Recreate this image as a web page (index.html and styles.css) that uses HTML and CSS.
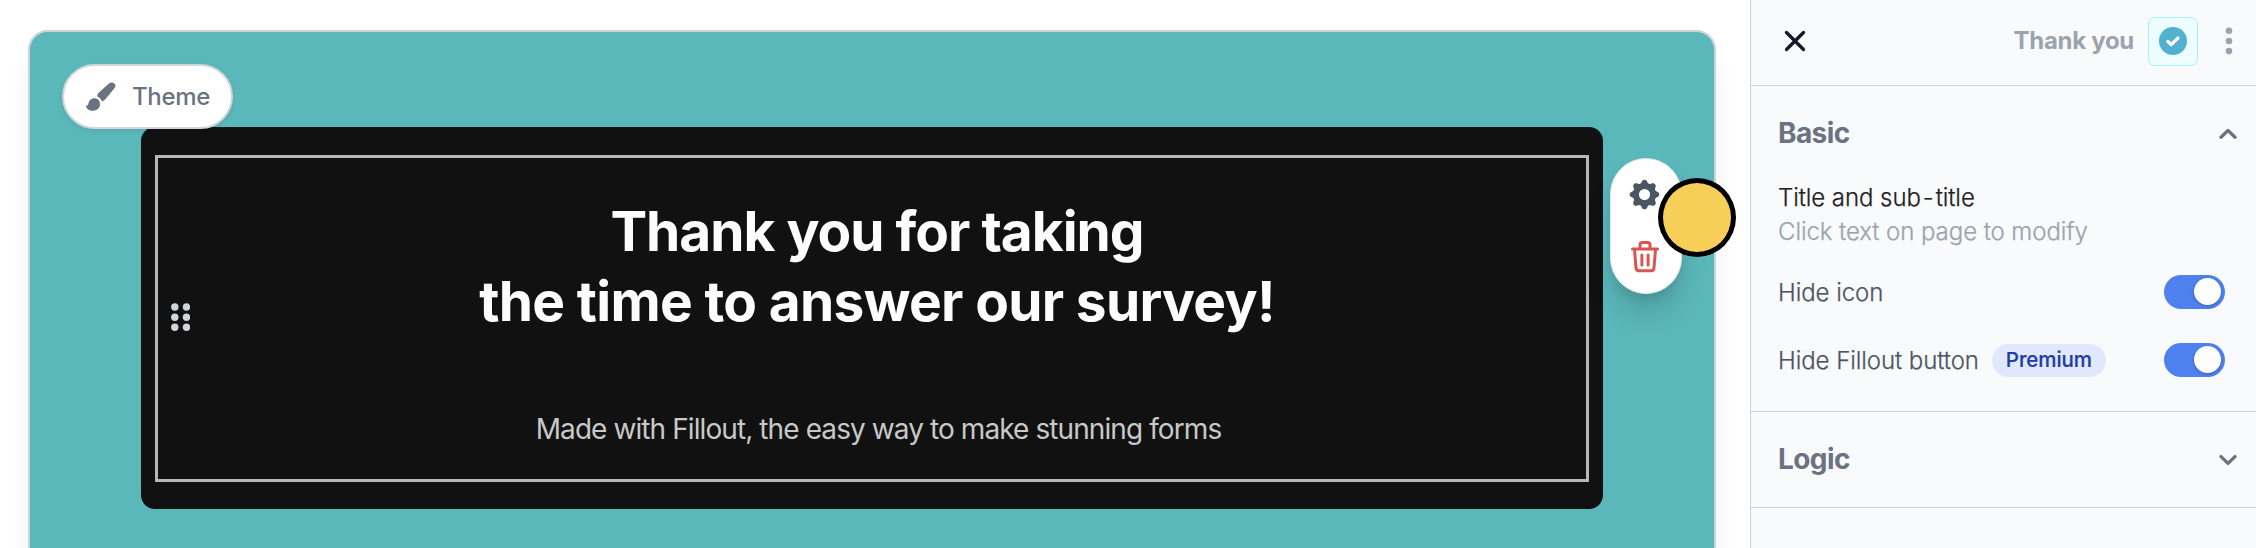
FILE: index.html
```html
<!DOCTYPE html>
<html lang="en">
<head>
<meta charset="utf-8">
<title>Form editor</title>
<link rel="stylesheet" href="styles.css">
</head>
<body>
<div class="app">
  <main class="workspace">
    <div class="canvas">
      <button class="theme-button">
        <svg width="32" height="32" viewBox="0 0 32 32" fill="#6b7280"><path d="M28.9 2.3C27.6 1 25.400 1.400 24 2.600L14.200 11.200C12.700 12.600 12 14.200 12.200 15.600C14.500 16.500 16.100 18.200 16.900 20.300C18.500 19.900 19.600 19.300 20.800 17.800L29.600 7C31 5.300 31 3.700 28.900 2.300Z"/><path d="M9.300 17.300C12.700 17.300 15 19.700 15 23C15 27 12 29.700 8 29.700C4.300 29.700 1.200 28 1 24.400C1.800 24.700 3 24.500 3.300 23.300C3.800 19.800 6 17.300 9.300 17.300Z"/></svg>
        <span class="theme-label">Theme</span>
      </button>
      <section class="block">
        <div class="block-frame">
          <svg class="drag" width="20" height="28" viewBox="0 0 20 28" fill="#d1d5db"><circle cx="4.800" cy="4" r="3.700"/><circle cx="16.500" cy="4" r="3.700"/><circle cx="4.800" cy="14.200" r="3.700"/><circle cx="16.500" cy="14.200" r="3.700"/><circle cx="4.800" cy="24.300" r="3.700"/><circle cx="16.500" cy="24.300" r="3.700"/></svg>
          <h1 class="title"><span class="line-one">Thank you for taking</span><br><span class="line-two">the time to answer our survey!</span></h1>
          <p class="subtitle">Made with Fillout, the easy way to make stunning forms</p>
        </div>
        <div class="tools">
          <svg width="37" height="37" viewBox="0 0 20 20" fill="#4b5563"><path fill-rule="evenodd" d="M11.490 3.170c-.38-1.560-2.600-1.560-2.980 0a1.532 1.532 0 01-2.286.948c-1.372-.836-2.942.734-2.106 2.106.54.886.061 2.042-.947 2.287-1.561.379-1.561 2.600 0 2.978a1.532 1.532 0 01.947 2.287c-.836 1.372.734 2.942 2.106 2.106a1.532 1.532 0 012.287.947c.379 1.561 2.600 1.561 2.978 0a1.533 1.533 0 012.287-.947c1.372.836 2.942-.734 2.106-2.106a1.533 1.533 0 01.947-2.287c1.561-.379 1.561-2.600 0-2.978a1.532 1.532 0 01-.947-2.287c.836-1.372-.734-2.942-2.106-2.106a1.532 1.532 0 01-2.287-.947zM10 13a3 3 0 100-6 3 3 0 000 6z"/></svg>
          <svg width="30" height="34" viewBox="0 0 30 34" fill="none" stroke="#dc5450" stroke-width="3" stroke-linecap="round" stroke-linejoin="round"><path d="M2.500 10H27.500M4.500 10L6 29Q6.300 31.800 9 31.800H21Q23.700 31.800 24 29L25.500 10M10 9.500V6Q10 3.500 12.500 3.500H17.500Q20 3.500 20 6V9.500M11.900 16V26M18.100 16V26"/></svg>
          <i class="pointer"></i>
        </div>
      </section>
    </div>
  </main>
  <aside class="panel">
    <header class="panel-head">
      <svg width="24" height="24" viewBox="0 0 24 24" fill="none" stroke="#111827" stroke-width="3.300" stroke-linecap="round"><path d="M3.500 3.500L20.500 20.500M20.500 3.500L3.500 20.500"/></svg>
      <span class="step-name">Thank you</span>
      <span class="step-icon"><svg width="28" height="28" viewBox="0 0 28 28"><circle cx="14" cy="14" r="14" fill="#51b1ce"/><path d="M8.800 14.500L12.200 17.600L18.900 11.100" fill="none" stroke="#fff" stroke-width="3.400" stroke-linecap="round" stroke-linejoin="round"/></svg></span>
      <svg class="more" width="8" height="28" viewBox="0 0 8 28" fill="#9ca3af"><circle cx="4" cy="3.700" r="3.300"/><circle cx="4" cy="14" r="3.300"/><circle cx="4" cy="24.100" r="3.300"/></svg>
    </header>
    <section class="group">
      <div class="group-head"><h2 class="group-name">Basic</h2>
        <svg width="18" height="12" viewBox="0 0 18 12" fill="none" stroke="#6b7280" stroke-width="3.300" stroke-linecap="round" stroke-linejoin="round"><path d="M2 9.200L9 2.400L16 9.200"/></svg></div>
      <p class="field-name">Title and sub<span class="dash">-</span>title</p>
      <p class="field-hint">Click text on page to modify</p>
      <div class="row first"><span class="row-label">Hide icon</span><span class="toggle"><i class="knob"></i></span></div>
      <div class="row"><span class="row-label">Hide Fillout button</span><span class="badge">Premium</span><span class="toggle"><i class="knob"></i></span></div>
    </section>
    <section class="group closed">
      <div class="group-head"><h2 class="group-name">Logic</h2>
        <svg width="18" height="12" viewBox="0 0 18 12" fill="none" stroke="#6b7280" stroke-width="3.300" stroke-linecap="round" stroke-linejoin="round"><path d="M2 2.600L9 9.400L16 2.600"/></svg></div>
    </section>
  </aside>
</div>
</body>
</html>
```
FILE: styles.css
```css
* { box-sizing: border-box; margin: 0; padding: 0; }
body { font-family: Inter, "Liberation Sans", sans-serif; background: #fff; }
svg { display: block; flex: none; }
.app { display: flex; width: 2256px; height: 548px; overflow: hidden; }
.workspace { flex: 1; padding: 30px 34px 0 28px; overflow: hidden; }
.canvas { position: relative; height: 640px; border: 2px solid #cfd3d8; border-radius: 20px; background: #5ab7ba; padding: 95px 111px 0; box-shadow: 0 24px 26px -4px rgba(0,0,0,.08); }
.theme-button { position: absolute; z-index: 2; left: 32px; top: 32px; width: 171px; height: 65px; display: flex; align-items: center; padding-left: 21px; gap: 15px; background: #fff; border: 2px solid #d1d5db; border-radius: 33px; font-family: inherit; box-shadow: 0 2px 4px rgba(0,0,0,.08); }
.theme-label { font-size: 24px; line-height: 32px; font-weight: 500; letter-spacing: -.3px; color: #6b7280; }
.block { position: relative; height: 382px; padding: 28px 14px 27px; border-radius: 14px; background: #111; }
.block-frame { position: relative; height: 327px; border: 3px solid #b7b7b7; padding-top: 38px; text-align: center; }
.drag { position: absolute; left: 12px; top: 145px; }
.title { font-size: 55px; line-height: 70px; font-weight: 700; color: #fcfcfc; padding-left: 10px; white-space: nowrap; }
.line-one { letter-spacing: -1px; }
.line-two { letter-spacing: -.68px; }
.subtitle { margin-top: 73px; padding-left: 13px; font-size: 28px; line-height: 40px; letter-spacing: -.91px; color: #c8c8c8; white-space: nowrap; }
.tools { position: absolute; left: 1469px; top: 31px; width: 72px; height: 136px; border-radius: 36px; background: #fff; border: 1px solid #e5e7eb; display: flex; flex-direction: column; align-items: center; padding: 17px 3px 0 0; gap: 26px; box-shadow: 0 20px 30px -4px rgba(0,0,0,.16), 0 8px 12px -4px rgba(0,0,0,.1); }
.pointer { position: absolute; left: 47px; top: 19px; width: 78px; height: 79px; border-radius: 50%; border: 5px solid #000; background: #f7ce58; }
.panel { width: 506px; background: #f9fafc; border-left: 1px solid #cdd1d6; }
.panel-head { height: 86px; border-bottom: 1px solid #cdd1d6; display: flex; align-items: center; padding: 0 23px 3px 32px; }
.step-name { margin-left: auto; font-size: 24px; line-height: 32px; font-weight: 700; letter-spacing: -.3px; color: #9ca3af; white-space: nowrap; }
.step-icon { width: 50px; height: 49px; margin-left: 14px; border: 1px solid #a5f0fa; border-radius: 7px; background: #ecfeff; display: flex; align-items: center; justify-content: center; }
.more { margin-left: 27px; }
.group { height: 326px; border-bottom: 1px solid #cdd1d6; padding: 0 31px 0 27px; }
.closed { height: 96px; }
.group-head { height: 95px; display: flex; align-items: center; justify-content: space-between; margin-right: -12px; }
.group-name { font-size: 28px; line-height: 36px; font-weight: 700; letter-spacing: -.6px; color: #6b7280; padding-bottom: 1px; }
.field-name, .field-hint, .row-label { font-size: 24px; line-height: 34px; font-weight: 300; letter-spacing: -.07px; white-space: nowrap; -webkit-text-stroke: .25px currentColor; }
.field-name { color: #222; }
.dash { margin: 0 2px; }
.field-hint { color: #9ca3af; }
.row { height: 68px; display: flex; align-items: center; }
.first { margin-top: 9px; }
.row-label { color: #4b5563; padding-top: 1px; }
.toggle { margin-left: auto; width: 61px; height: 34px; border-radius: 17px; background: #4e80ee; padding: 3px 4px 0 30px; }
.knob { display: block; width: 27px; height: 27px; border-radius: 50%; background: #fff; box-shadow: 0 1px 3px rgba(0,0,0,.25); }
.badge { margin-left: 13px; width: 114px; height: 33px; border-radius: 17px; background: #dfe9fb; color: #233ba6; font-size: 20.500px; line-height: 32px; font-weight: 500; letter-spacing: -.1px; text-align: center; -webkit-text-stroke: .2px currentColor; }
```
